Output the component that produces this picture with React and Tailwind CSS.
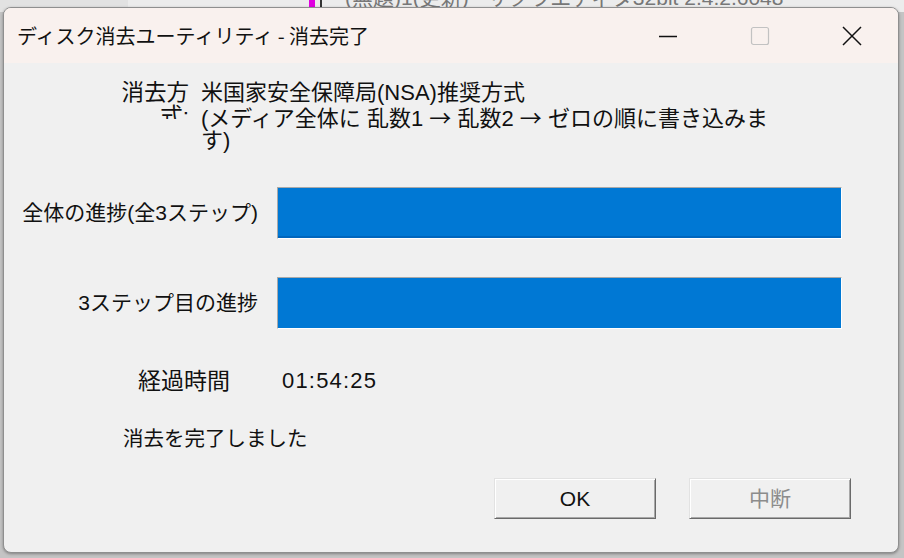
export default function App() {
  const font = { fontFamily: '"Liberation Sans", "Noto Sans CJK JP", sans-serif' };
  const cjk = { fontFamily: '"Noto Sans CJK JP", sans-serif' };

  return (
    <div className="relative w-[904px] h-[558px] overflow-hidden bg-[#c4c4c4]" style={font}>
      {/* desktop behind the dialog */}
      <div className="absolute inset-x-0 top-0 h-[12px] bg-[#ececec]" />
      <div className="absolute left-0 top-0 w-[128px] h-[12px] bg-[#e2e2e2]" />
      <div className="absolute left-[309px] top-0 w-[6px] h-[8px] bg-[#e000e0]" />
      <div className="absolute left-[320px] top-0 w-[2px] h-[8px] bg-[#333]" />
      <div className="absolute left-[345px] top-[-14px] text-[21px] leading-[24px] text-[#777] whitespace-nowrap">
        (無題)1(更新) - サクラエディタ32bit 2.4.2.6048
      </div>

      {/* dialog window */}
      <div className="absolute left-[3px] top-[7px] w-[896px] h-[546px] flex flex-col rounded-[8px] border border-[#8f8f8f] bg-[#f0f0f0] overflow-hidden shadow-[0_1px_3px_rgba(0,0,0,0.35)]">
        {/* title bar */}
        <div className="h-[55px] shrink-0 flex items-center bg-[#f9f1ee]">
          <div className="pl-[13px] text-[20px] text-[#111] whitespace-nowrap" style={cjk}>
            ディスク消去ユーティリティ - 消去完了
          </div>
          <div className="ml-auto flex items-center">
            <div className="w-[92px] h-[55px] flex items-center justify-center">
              <svg width="20" height="20" viewBox="0 0 20 20">
                <line x1="1" y1="10.5" x2="19" y2="10.5" stroke="#111" strokeWidth="1.3" />
              </svg>
            </div>
            <div className="w-[92px] h-[55px] flex items-center justify-center">
              <svg width="20" height="20" viewBox="0 0 20 20">
                <rect x="1.5" y="1.5" width="17" height="17" rx="2" fill="none" stroke="#c2c2c2" strokeWidth="1.2" />
              </svg>
            </div>
            <div className="w-[92px] h-[55px] flex items-center justify-center">
              <svg width="22" height="22" viewBox="0 0 22 22">
                <path d="M2 2 L20 20 M20 2 L2 20" stroke="#111" strokeWidth="1.5" fill="none" />
              </svg>
            </div>
          </div>
        </div>

        {/* body */}
        <div className="flex flex-col text-[#111]">
          {/* erase method */}
          <div className="mt-[18px] flex h-[72px]">
            <div className="ml-[102px] w-[83px] h-[38px] overflow-hidden text-right text-[22.5px] leading-[24px]">
              消去方式:
            </div>
            <div className="ml-[12px] text-[22px] leading-[24px] whitespace-nowrap">
              <div className="h-[24px]">米国家安全保障局(NSA)推奨方式</div>
              <div className="h-[24px]">
                (メディア全体に 乱数1 <span className="leading-none" style={cjk}>→</span> 乱数2{" "}
                <span className="leading-none" style={cjk}>→</span> ゼロの順に書き込みま
              </div>
              <div className="h-[24px]">す)</div>
            </div>
          </div>

          {/* overall progress */}
          <div className="mt-[34px] flex items-center">
            <div className="w-[254px] text-right text-[21px] leading-[24px] whitespace-nowrap">
              全体の進捗(全3ステップ)
            </div>
            <div className="ml-[19px] w-[565px] h-[52px] border-t border-l border-[#a9a9a9] border-b border-r border-b-white border-r-white bg-[#0078d4]">
              <div className="h-full w-full border-b-2 border-[#0066bd]" />
            </div>
          </div>

          {/* step progress */}
          <div className="mt-[38px] flex items-center">
            <div className="w-[254px] text-right text-[21px] leading-[24px] whitespace-nowrap">
              3ステップ目の進捗
            </div>
            <div className="ml-[19px] w-[565px] h-[52px] border-t border-l border-[#a9a9a9] border-b border-r border-b-white border-r-white bg-[#0078d4]" />
          </div>

          {/* elapsed */}
          <div className="mt-[40px] flex items-center h-[24px] leading-[24px]">
            <div className="ml-[134px] w-[144px] text-[23px]">経過時間</div>
            <div className="text-[22px] tracking-[1.2px]">01:54:25</div>
          </div>

          {/* status */}
          <div className="mt-[34px] ml-[119px] h-[24px] text-[20.5px] leading-[24px]">消去を完了しました</div>

          {/* buttons */}
          <div className="mt-[27px] flex justify-end gap-[33px] pr-[47px]">
            <button className="w-[162px] h-[41px] flex items-center justify-center bg-[#f0f0f0] border border-t-[#e2e2e2] border-l-[#e2e2e2] border-b-[#6a6a6a] border-r-[#6a6a6a] shadow-[inset_1px_1px_0_#ffffff,inset_-1px_-1px_0_#a8a8a8] text-[21px] text-[#111]">
              OK
            </button>
            <button className="w-[162px] h-[41px] flex items-center justify-center bg-[#f0f0f0] border border-t-[#e2e2e2] border-l-[#e2e2e2] border-b-[#6a6a6a] border-r-[#6a6a6a] shadow-[inset_1px_1px_0_#ffffff,inset_-1px_-1px_0_#a8a8a8] text-[21px] text-[#8c8c8c]">
              中断
            </button>
          </div>
        </div>
      </div>
    </div>
  );
}
